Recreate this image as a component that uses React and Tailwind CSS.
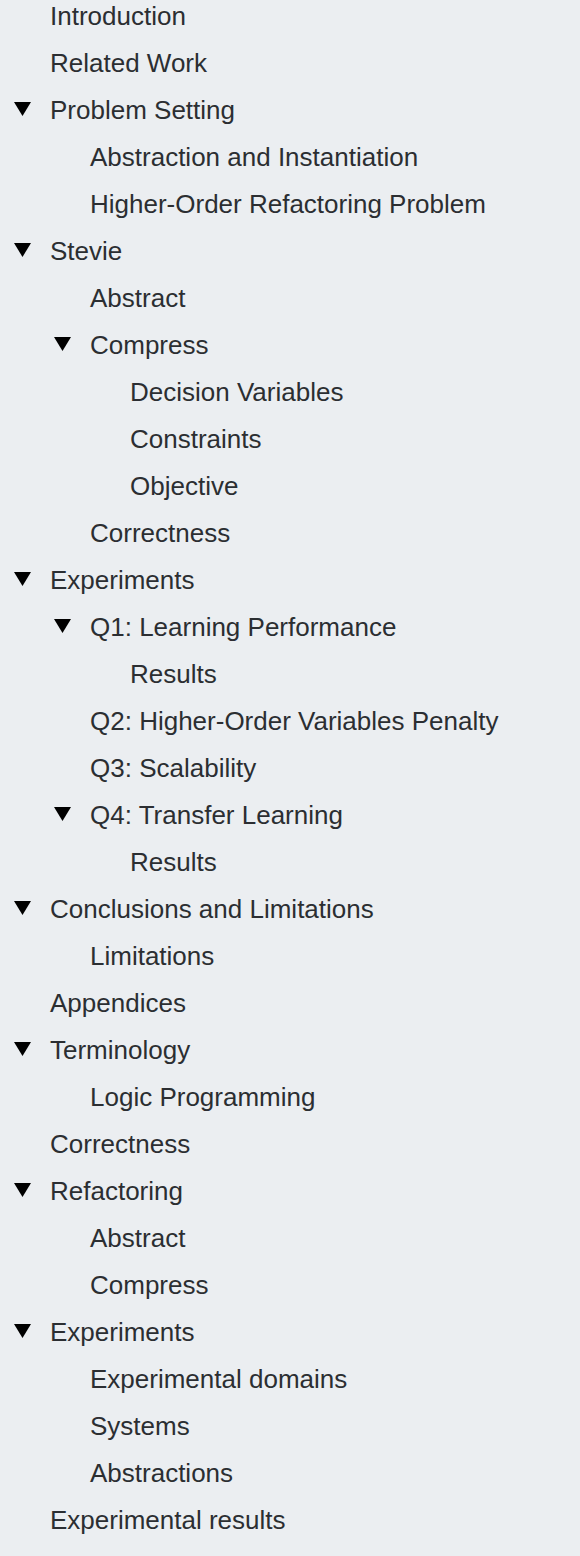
const toc = [
  { title: "Introduction" },
  { title: "Related Work" },
  {
    title: "Problem Setting",
    children: [
      { title: "Abstraction and Instantiation" },
      { title: "Higher-Order Refactoring Problem" },
    ],
  },
  {
    title: "Stevie",
    children: [
      { title: "Abstract" },
      {
        title: "Compress",
        children: [
          { title: "Decision Variables" },
          { title: "Constraints" },
          { title: "Objective" },
        ],
      },
      { title: "Correctness" },
    ],
  },
  {
    title: "Experiments",
    children: [
      { title: "Q1: Learning Performance", children: [{ title: "Results" }] },
      { title: "Q2: Higher-Order Variables Penalty" },
      { title: "Q3: Scalability" },
      { title: "Q4: Transfer Learning", children: [{ title: "Results" }] },
    ],
  },
  { title: "Conclusions and Limitations", children: [{ title: "Limitations" }] },
  { title: "Appendices" },
  { title: "Terminology", children: [{ title: "Logic Programming" }] },
  { title: "Correctness" },
  { title: "Refactoring", children: [{ title: "Abstract" }, { title: "Compress" }] },
  {
    title: "Experiments",
    children: [
      { title: "Experimental domains" },
      { title: "Systems" },
      { title: "Abstractions" },
    ],
  },
  { title: "Experimental results" },
];

const indent = ["pl-[14px]", "pl-[54px]", "pl-[94px]"];

function Caret() {
  return (
    <svg width="17" height="14" viewBox="0 0 17 14" className="mt-[15px] shrink-0">
      <path d="M0 0 L17 0 L8.5 14 Z" fill="#000" />
    </svg>
  );
}

function Entry({ item, level }) {
  const open = item.children && item.children.length > 0;
  return (
    <li>
      <div className={`flex items-start h-[47px] ${indent[level]}`}>
        <div className="w-[36px] shrink-0 flex">{open && <Caret />}</div>
        <span className="whitespace-nowrap">{item.title}</span>
      </div>
      {open && (
        <ul>
          {item.children.map((child, i) => (
            <Entry key={i} item={child} level={level + 1} />
          ))}
        </ul>
      )}
    </li>
  );
}

export default function App() {
  return (
    <div className="min-h-[1556px] w-[580px] bg-[#ebeef1] overflow-hidden">
      <ul
        className="-mt-[7px] text-[26px] leading-[47px] text-[#2b2e32]"
        style={{ fontFamily: '"Liberation Sans", Arial, sans-serif' }}
      >
        {toc.map((item, i) => (
          <Entry key={i} item={item} level={0} />
        ))}
      </ul>
    </div>
  );
}
